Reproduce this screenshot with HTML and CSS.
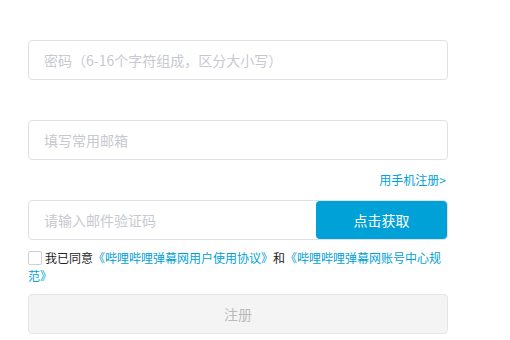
FILE: index.html
```html
<!DOCTYPE html>
<html lang="zh-CN">
<head>
<meta charset="utf-8">
<link rel="stylesheet" href="styles.css">
</head>
<body>
<form class="form">
  <div class="field"><input class="input" type="password" placeholder="密码（6-16个字符组成，区分大小写）"></div>
  <div class="field field-gap"><input class="input" type="text" placeholder="填写常用邮箱"></div>
  <div class="switch"><a class="link" href="#">用手机注册&gt;</a></div>
  <div class="field code-field">
    <input class="input code-input" type="text" placeholder="请输入邮件验证码">
    <button class="get-code" type="button">点击获取</button>
  </div>
  <div class="agree"><span class="check"></span>我已同意<a class="link" href="#">《哔哩哔哩弹幕网用户使用协议》</a>和<a class="link" href="#">《哔哩哔哩弹幕网账号中心规范》</a></div>
  <button class="submit" type="button">注册</button>
</form>
</body>
</html>
```
FILE: styles.css
```css
* { box-sizing: border-box; }
body {
  margin: 0;
  background: #fff;
  font-family: "Noto Sans CJK SC", "Noto Sans", sans-serif;
}
.form {
  width: 420px;
  margin-left: 28px;
  padding-top: 40px;
}
.field {
  display: flex;
  height: 40px;
  border: 1px solid #dfe0e6;
  border-radius: 4px;
  background: #fff;
}
.field-gap { margin-top: 40px; }
.input {
  flex: 1;
  min-width: 0;
  border: 0;
  outline: none;
  background: transparent;
  padding: 0 0 0 15px;
  font-family: inherit;
  font-size: 14px;
  color: #222;
}
.input::placeholder { color: #c7c9d0; }
.switch {
  display: flex;
  justify-content: flex-end;
  height: 20px;
  line-height: 20px;
  margin-top: 10px;
  padding-right: 2px;
  font-size: 12px;
}
.link {
  color: #00a1d6;
  text-decoration: none;
}
.code-field {
  margin-top: 10px;
  align-items: stretch;
}
.get-code {
  width: 131px;
  margin: 0;
  border: 0;
  border-radius: 4px;
  background: #00a1d6;
  color: #fff;
  font-family: inherit;
  font-size: 14px;
}
.agree {
  margin-top: 9px;
  font-size: 12px;
  line-height: 18px;
  color: #222;
}
.check {
  display: inline-block;
  width: 14px;
  height: 14px;
  margin-right: 3px;
  vertical-align: -2px;
  border: 1px solid #ccd0d7;
  border-radius: 2px;
  background: #fff;
}
.submit {
  display: block;
  width: 100%;
  height: 40px;
  margin-top: 9px;
  border: 1px solid #e5e5e5;
  border-radius: 4px;
  background: #f4f4f4;
  color: #bbbbbb;
  font-family: inherit;
  font-size: 14px;
}
```
